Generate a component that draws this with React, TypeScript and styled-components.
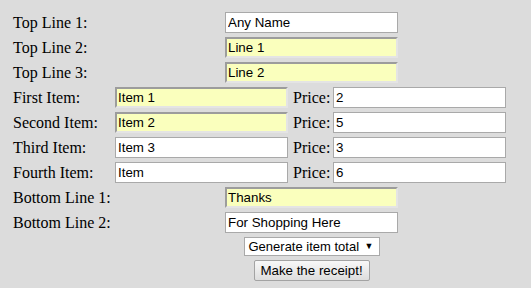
import React from 'react';
import styled, { createGlobalStyle } from 'styled-components';

const GlobalStyle = createGlobalStyle`
  html, body {
    margin: 0;
    padding: 0;
    background: #dcdcdc;
  }
  body {
    font-family: "Liberation Serif", "Times New Roman", serif;
    font-size: 16px;
    color: #000;
  }
`;

const Form = styled.div`
  display: grid;
  grid-template-columns: 102px 177px 41px 173px;
  grid-template-rows: repeat(9, 21px) 19px 21px;
  row-gap: 4px;
  padding: 12px 0 0 13px;
  width: 493px;
`;

const Label = styled.div`
  display: flex;
  align-items: center;
  white-space: nowrap;
  font-size: 16px;
  line-height: 18px;
`;

const Wide = styled.div`
  grid-column: 2 / 5;
  display: flex;
  justify-content: center;
  padding-left: 2px;
`;

const Field = styled.input<{ $filled?: boolean }>`
  box-sizing: border-box;
  width: 173px;
  height: 21px;
  margin: 0;
  padding: 1px ${(p) => (p.$filled ? '1px' : '2px')};
  font-family: "Liberation Sans", Arial, sans-serif;
  font-size: 13.33px;
  color: #000;
  outline: none;
  background: ${(p) => (p.$filled ? '#faffbd' : '#fff')};
  border: ${(p) => (p.$filled ? '2px' : '1px')} solid;
  border-color: ${(p) =>
    p.$filled ? '#9c9c9c #e4e4e4 #e4e4e4 #9c9c9c' : '#a9a9a9'};
`;

const PriceLabel = styled(Label)`
  padding-left: 1px;
`;

const SelectBox = styled.div`
  position: relative;
  box-sizing: border-box;
  width: 136px;
  height: 19px;
  background: #fff;
  border: 1px solid #a9a9a9;
  font-family: "Liberation Sans", Arial, sans-serif;
  font-size: 13px;
  line-height: 17px;
  padding-left: 4px;
  color: #000;
  white-space: nowrap;
`;

const Arrow = styled.span`
  position: absolute;
  right: 5px;
  top: 0;
  font-size: 9px;
  line-height: 16px;
`;

const Button = styled.button`
  box-sizing: border-box;
  width: 116px;
  height: 21px;
  margin: 0;
  padding: 0;
  font-family: "Liberation Sans", Arial, sans-serif;
  font-size: 13.33px;
  color: #000;
  border: 1px solid #a3a3a3;
  border-radius: 2px;
  background: linear-gradient(#f8f8f8, #dddddd);
`;

const topLines = [
  { label: 'Top Line 1:', value: 'Any Name', filled: false },
  { label: 'Top Line 2:', value: 'Line 1', filled: true },
  { label: 'Top Line 3:', value: 'Line 2', filled: true },
];

const items = [
  { label: 'First Item:', name: 'Item 1', price: '2', filled: true },
  { label: 'Second Item:', name: 'Item 2', price: '5', filled: true },
  { label: 'Third Item:', name: 'Item 3', price: '3', filled: false },
  { label: 'Fourth Item:', name: 'Item', price: '6', filled: false },
];

const bottomLines = [
  { label: 'Bottom Line 1:', value: 'Thanks', filled: true },
  { label: 'Bottom Line 2:', value: 'For Shopping Here', filled: false },
];

const App: React.FC = () => {
  return (
    <>
      <GlobalStyle />
      <Form>
        {topLines.map((l) => (
          <React.Fragment key={l.label}>
            <Label>{l.label}</Label>
            <Wide>
              <Field $filled={l.filled} defaultValue={l.value} />
            </Wide>
          </React.Fragment>
        ))}
        {items.map((it) => (
          <React.Fragment key={it.label}>
            <Label>{it.label}</Label>
            <div>
              <Field $filled={it.filled} defaultValue={it.name} />
            </div>
            <PriceLabel>Price:</PriceLabel>
            <div>
              <Field defaultValue={it.price} />
            </div>
          </React.Fragment>
        ))}
        {bottomLines.map((l) => (
          <React.Fragment key={l.label}>
            <Label>{l.label}</Label>
            <Wide>
              <Field $filled={l.filled} defaultValue={l.value} />
            </Wide>
          </React.Fragment>
        ))}
        <Wide>
          <SelectBox>
            Generate item total
            <Arrow>▼</Arrow>
          </SelectBox>
        </Wide>
        <Wide>
          <Button>Make the receipt!</Button>
        </Wide>
      </Form>
    </>
  );
};

export default App;
